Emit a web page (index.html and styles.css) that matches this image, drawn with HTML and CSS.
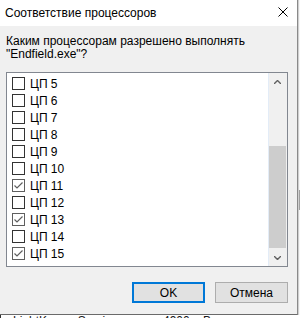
FILE: index.html
```html
<!DOCTYPE html>
<html lang="ru">
<head>
<meta charset="utf-8">
<title>Соответствие процессоров</title>
<link rel="stylesheet" href="styles.css">
</head>
<body>
<div class="screen">
  <div class="top">
    <div class="dialog">
      <div class="titlebar">
        <span class="title">Соответствие процессоров</span>
        <svg class="close" width="10" height="10" viewBox="0 0 10 10"><path d="M0.5 0.5 L9.5 9.5 M9.5 0.5 L0.5 9.5" stroke="#000" stroke-width="1" fill="none"/></svg>
      </div>
      <div class="body">
        <p class="label">Каким процессорам разрешено выполнять<br>"Endfield.exe"?</p>
        <div class="list">
          <div class="items">
            <div class="row"><span class="cb"></span><span class="name">ЦП 5</span></div>
            <div class="row"><span class="cb"></span><span class="name">ЦП 6</span></div>
            <div class="row"><span class="cb"></span><span class="name">ЦП 7</span></div>
            <div class="row"><span class="cb"></span><span class="name">ЦП 8</span></div>
            <div class="row"><span class="cb"></span><span class="name">ЦП 9</span></div>
            <div class="row"><span class="cb"></span><span class="name">ЦП 10</span></div>
            <div class="row"><span class="cb checked"><svg width="11" height="11" viewBox="0 0 11 11"><path d="M1.5 5.5 L4 8 L9.5 2.5" stroke="#5f5f5f" stroke-width="1.2" fill="none"/></svg></span><span class="name">ЦП 11</span></div>
            <div class="row"><span class="cb"></span><span class="name">ЦП 12</span></div>
            <div class="row"><span class="cb checked"><svg width="11" height="11" viewBox="0 0 11 11"><path d="M1.5 5.5 L4 8 L9.5 2.5" stroke="#5f5f5f" stroke-width="1.2" fill="none"/></svg></span><span class="name">ЦП 13</span></div>
            <div class="row"><span class="cb"></span><span class="name">ЦП 14</span></div>
            <div class="row"><span class="cb checked"><svg width="11" height="11" viewBox="0 0 11 11"><path d="M1.5 5.5 L4 8 L9.5 2.5" stroke="#5f5f5f" stroke-width="1.2" fill="none"/></svg></span><span class="name">ЦП 15</span></div>
          </div>
          <div class="scrollbar">
            <div class="arrow"><svg width="7" height="4" viewBox="0 0 7 4"><path d="M0 4 L3.5 0.5 L7 4" stroke="#606060" stroke-width="1.4" fill="none"/></svg></div>
            <div class="track"><div class="thumb"></div></div>
            <div class="arrow"><svg width="7" height="4" viewBox="0 0 7 4"><path d="M0 0 L3.5 3.5 L7 0" stroke="#606060" stroke-width="1.4" fill="none"/></svg></div>
          </div>
        </div>
        <div class="buttons">
          <button class="btn default">OK</button>
          <button class="btn">Отмена</button>
        </div>
      </div>
    </div>
    <div class="side"><div class="side-thumb"></div></div>
  </div>
  <div class="behind">
    <span class="c1">LightKeeperService.exe</span>
    <span class="c2">4900</span>
    <span class="c3">Выполняется</span>
  </div>
</div>
</body>
</html>
```

FILE: styles.css
```css
html, body {
  margin: 0;
  padding: 0;
}
body {
  width: 300px;
  height: 318px;
  overflow: hidden;
  background: #ffffff;
  font-family: "Liberation Sans", Arial, sans-serif;
  font-size: 12px;
  color: #000;
}
.screen {
  display: flex;
  flex-direction: column;
  width: 300px;
  height: 318px;
}
.top {
  display: flex;
  height: 315px;
  flex: none;
}
.dialog {
  width: 297px;
  height: 314px;
  background: #f0f0f0;
  border-right: 1px solid #8a8a8a;
  border-bottom: 1px solid #6a6a6a;
  display: flex;
  flex-direction: column;
}
.titlebar {
  height: 26px;
  background: #ffffff;
  display: flex;
  align-items: center;
  justify-content: space-between;
  padding-left: 5px;
  padding-right: 9px;
  flex: none;
}
.title {
  font-size: 12px;
  line-height: 16px;
}
.close {
  display: block;
  margin-top: -2px;
}
.body {
  display: flex;
  flex-direction: column;
  padding: 9px 9px 0 6px;
}
.label {
  margin: 0;
  line-height: 13px;
  height: 26px;
}
.list {
  margin-top: 11px;
  height: 193px;
  border: 1px solid #828790;
  background: #ffffff;
  display: flex;
}
.items {
  flex: 1;
  padding-top: 2px;
  border-right: 1px solid #e3ecf7;
}
.row {
  height: 17px;
  display: flex;
  align-items: center;
  padding-left: 5px;
  gap: 5px;
}
.cb {
  width: 11px;
  height: 11px;
  border: 1px solid #333333;
  background: #ffffff;
  display: flex;
  align-items: center;
  justify-content: center;
}
.cb.checked {
  border-color: #5f5f5f;
}
.cb svg {
  display: block;
}
.name {
  line-height: 14px;
}
.scrollbar {
  width: 17px;
  border-right: 1px solid #f0f0f0;
  background: #f0f0f0;
  display: flex;
  flex-direction: column;
}
.arrow {
  height: 17px;
  display: flex;
  align-items: center;
  justify-content: center;
  flex: none;
}
.arrow svg {
  display: block;
}
.track {
  flex: 1;
  display: flex;
  flex-direction: column;
  padding-top: 56px;
}
.thumb {
  height: 102px;
  background: #cdcdcd;
}
.buttons {
  margin-top: 15px;
  display: flex;
  justify-content: flex-end;
  gap: 10px;
}
.btn {
  width: 73px;
  height: 21px;
  background: #e1e1e1;
  border: 1px solid #adadad;
  font-family: "Liberation Sans", Arial, sans-serif;
  font-size: 12px;
  color: #000;
  padding: 0;
  margin: 0;
}
.btn.default {
  border: 2px solid #0078d7;
}
.side {
  flex: 1;
  background: #f7f7f7;
  border-left: 1px solid #d0d0d0;
  display: flex;
  flex-direction: column;
  padding-top: 190px;
}
.side-thumb {
  height: 20px;
  background: #a0a0a0;
}
.behind {
  display: flex;
  line-height: 12px;
  height: 12px;
  padding-left: 12px;
  color: #1a1a1a;
  white-space: nowrap;
  overflow: hidden;
  border-left: 1px solid #333;
}
.c1 { width: 150px; }
.c2 { width: 40px; }
.c3 { }
```
